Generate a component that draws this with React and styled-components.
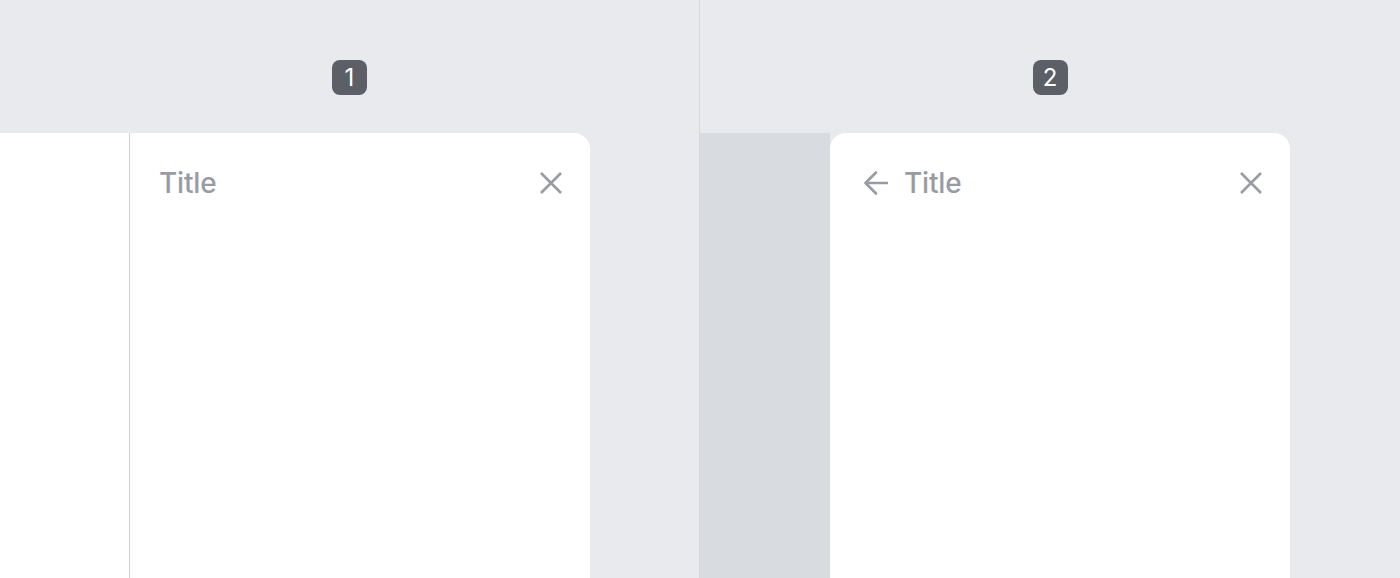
import React from "react";
import styled, { createGlobalStyle } from "styled-components";

const Global = createGlobalStyle`
  html, body { margin: 0; padding: 0; background: #e9eaee; }
  body { font-family: Inter, "Noto Sans", sans-serif; }
`;

const Root = styled.div`
  display: flex;
  width: 1400px;
  height: 578px;
  overflow: hidden;
  background: #e9eaee;
`;

const Panel = styled.div`
  display: flex;
  flex-direction: column;
  width: ${(p) => p.$width}px;
  flex: ${(p) => (p.$width ? "none" : "1")};
  border-right: ${(p) => (p.$divider ? "1px solid #d6d8dc" : "none")};
`;

const Header = styled.div`
  height: 133px;
  display: flex;
  align-items: center;
  justify-content: center;
  box-sizing: border-box;
`;

const Badge = styled.div`
  width: 35px;
  height: 35px;
  border-radius: 8px;
  background: #5c5f66;
  color: #fff;
  font-size: 24px;
  font-weight: 400;
  display: flex;
  align-items: center;
  justify-content: center;
  margin-top: 22px;
`;

const Body = styled.div`
  flex: 1;
  display: flex;
`;

const Side = styled.div`
  width: ${(p) => p.$width}px;
  background: ${(p) => (p.$white ? "#ffffff" : "#d8dbdf")};
  border-right: ${(p) => (p.$white ? "1px solid #cfd1d5" : "none")};
`;

const Card = styled.div`
  width: 460px;
  background: #fff;
  border-radius: ${(p) => (p.$leftRound ? "16px 16px 0 0" : "0 16px 0 0")};
  display: flex;
  flex-direction: column;
`;

const CardHeader = styled.div`
  height: 100px;
  display: flex;
  align-items: center;
  padding: 0 27px 0 ${(p) => p.$pl}px;
  gap: 16px;
`;

const Title = styled.div`
  flex: 1;
  font-size: 28px;
  color: #999ba2;
  font-weight: 500;
  letter-spacing: -0.2px;
`;

const IconBtn = styled.svg`
  width: 24px;
  height: 24px;
  flex: none;
  color: #999ba2;
`;

const Close = () => (
  <IconBtn viewBox="0 0 24 24" fill="none" stroke="currentColor" strokeWidth="2.6">
    <path d="M2 2 L22 22 M22 2 L2 22" />
  </IconBtn>
);

const Back = () => (
  <IconBtn viewBox="0 0 24 24" fill="none" stroke="currentColor" strokeWidth="2.6" strokeLinecap="round" strokeLinejoin="round">
    <path d="M23 12 H2 M12 1.5 L1.5 12 L12 22.5" />
  </IconBtn>
);

export default function App() {
  return (
    <>
      <Global />
      <Root>
        <Panel $width={699} $divider>
          <Header>
            <Badge>1</Badge>
          </Header>
          <Body>
            <Side $width={129} $white />
            <Card>
              <CardHeader $pl={29}>
                <Title>Title</Title>
                <Close />
              </CardHeader>
            </Card>
          </Body>
        </Panel>
        <Panel>
          <Header>
            <Badge>2</Badge>
          </Header>
          <Body>
            <Side $width={130} />
            <Card $leftRound>
              <CardHeader $pl={34}>
                <Back />
                <Title>Title</Title>
                <Close />
              </CardHeader>
            </Card>
          </Body>
        </Panel>
      </Root>
    </>
  );
}
